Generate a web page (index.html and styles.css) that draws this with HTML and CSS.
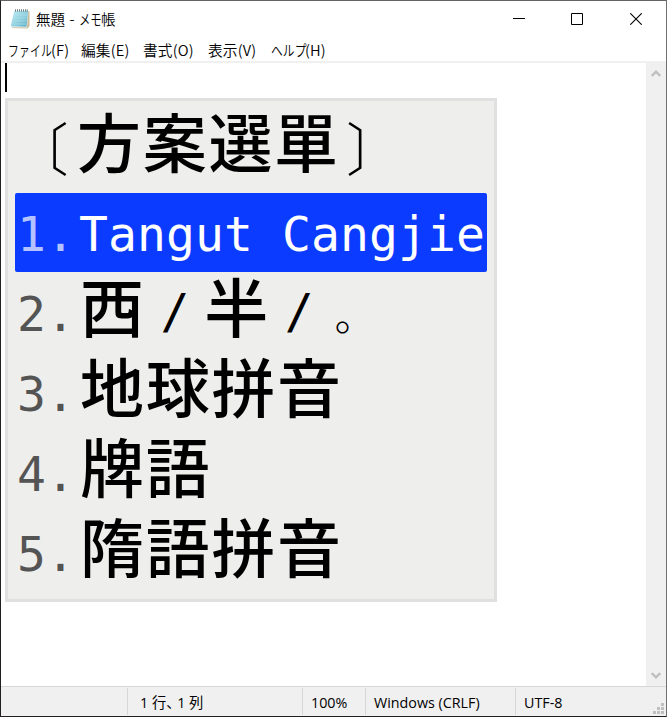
FILE: index.html
```html
<!DOCTYPE html>
<html lang="ja">
<head>
<meta charset="utf-8">
<title>無題 - メモ帳</title>
<link rel="stylesheet" href="styles.css">
</head>
<body>
<div class="window">
  <header class="titlebar">
    <svg class="app-icon" width="20" height="20" viewBox="0 0 20 20">
      <defs><linearGradient id="paper" x1="0" y1="0" x2="1" y2="1"><stop offset="0" stop-color="#c4edf6"/><stop offset=".55" stop-color="#8ccfdf"/><stop offset="1" stop-color="#58aabd"/></linearGradient></defs>
      <path d="M5 2L19.5 2L19.5 17L17.5 19.5L2 19Z" fill="#c9b996"/>
      <path d="M4.5 1.5L18.5 1.5L17 18.5L.8 18.2Z" fill="#eef7f8"/>
      <path d="M4.2 2L18.2 2L16.5 17.8L.8 17.2Z" fill="url(#paper)"/>
      <path d="M4 6h13M3.5 9h13M3 12h13M2 15h14" stroke="#b5e0e9" stroke-width=".7"/>
      <path d="M5.5 .2v2.5M7.5 .2v2.5M9.5 .2v2.5M11.5 .2v2.5M13.5 .2v2.5M15.5 .2v2.5M17.2 .2v2.5" stroke="#68777a" stroke-width=".9"/>
    </svg>
    <h1 class="title">無題<span class="dash">-</span><span class="kana kana-3">メモ</span>帳</h1>
    <div class="controls">
      <svg width="12" height="12" viewBox="0 0 12 12"><path d="M0 5.5h12" stroke="#000"/></svg>
      <svg width="12" height="12" viewBox="0 0 12 12"><path d="M.5 .5h11v11H.5z" fill="none" stroke="#000"/></svg>
      <svg width="12" height="12" viewBox="0 0 12 12"><path d="M.3 .3L11.7 11.7M11.7 .3L.3 11.7" stroke="#000" stroke-width="1.1"/></svg>
    </div>
  </header>
  <nav class="menubar">
    <span class="menu m1"><span class="kana kana-file">ファイル</span>(F)</span>
    <span class="menu m2">編集(E)</span>
    <span class="menu m3">書式(O)</span>
    <span class="menu m4">表示(V)</span>
    <span class="menu m5"><span class="kana kana-help">ヘルプ</span>(H)</span>
  </nav>
  <main class="editor">
    <div class="page">
      <div class="caret"></div>
      <section class="candidates">
        <h2 class="heading"><span class="bracket open">〔</span>方案選單<span class="bracket close">〕</span></h2>
        <ol class="list">
          <li class="row selected"><span class="num">1.</span><span class="latin">Tangut Cangjie</span></li>
          <li class="row"><span class="num">2.</span><span class="han">西<span class="slash">/</span>半<span class="slash">/</span><span class="stop">。</span></span></li>
          <li class="row"><span class="num">3.</span><span class="han">地球拼音</span></li>
          <li class="row"><span class="num">4.</span><span class="han">牌語</span></li>
          <li class="row"><span class="num">5.</span><span class="han">隋語拼音</span></li>
        </ol>
      </section>
    </div>
    <aside class="scrollbar">
      <svg width="10" height="7" viewBox="0 0 10 7"><path d="M.7 6L5 1.7L9.3 6" fill="none" stroke="#bfbfbf" stroke-width="2.4"/></svg>
      <svg width="10" height="7" viewBox="0 0 10 7"><path d="M.7 1L5 5.3L9.3 1" fill="none" stroke="#bfbfbf" stroke-width="2.4"/></svg>
    </aside>
  </main>
  <footer class="status">
    <span class="cell blank"></span>
    <span class="cell position">1 行<span class="comma">、</span>1 列</span>
    <span class="cell zoom">100%</span>
    <span class="cell eol">Windows (CRLF)</span>
    <span class="cell encoding">UTF-8</span>
    <svg class="grip" width="11" height="11" viewBox="0 0 11 11"><path d="M8 0h3v3H8zM4 4h3v3H4zM8 4h3v3H8zM0 8h3v3H0zM4 8h3v3H4zM8 8h3v3H8z" fill="#bfbfbf"/></svg>
  </footer>
</div>
</body>
</html>
```
FILE: styles.css
```css
* { box-sizing: border-box; }
body { margin: 0; background: #fff; }

.window {
  display: flex;
  flex-direction: column;
  width: 667px;
  height: 717px;
  border: 1px solid #231f20;
  border-top-color: #656366;
  border-right-color: #707070;
  background: #fff;
  color: #000;
  font: 14.5px/20px "Open Sans", "Noto Sans CJK JP", sans-serif;
  white-space: nowrap;
  overflow: hidden;
}

.titlebar { display: flex; height: 36px; padding-left: 9px; }
.app-icon { margin-top: 8px; }
.title { display: flex; margin: 8px 0 0 6px; font-size: 14.5px; font-weight: 350; font-family: "Noto Sans CJK JP", sans-serif; }
.dash { width: 14px; text-align: center; }
.kana { display: inline-block; transform-origin: 0 50%; }
.kana-3 { width: 22px; transform: scaleX(.78); }
.controls { display: flex; gap: 46px; margin: 12px 24px 0 auto; }
.controls svg:nth-child(-n+2) { margin: 0 1px 0 -1px; }

.menubar { display: flex; height: 24px; padding: 3px 0 0 7px; font-family: "Noto Sans CJK JP", sans-serif; font-weight: 350; font-size: 14.7px; }
.menu { letter-spacing: .15px; }
.m1 { width: 73px; }
.m2 { width: 62px; }
.m3 { width: 65px; }
.m4 { width: 63px; }
.kana-file { width: 43px; transform: scaleX(.74); }
.kana-help { width: 34px; transform: scaleX(.8); }

.editor { display: flex; flex: 1; min-height: 0; border-top: 2px solid #f0f0f0; }
.page { flex: 1; padding-left: 4px; }
.caret { width: 2px; height: 29px; background: #000; }

.candidates {
  width: 492px;
  height: 504px;
  margin-top: 6px;
  padding: 0 7px;
  border: 3px solid #e0e0e0;
  background: #eeeeec;
}
.heading, .han {
  font-family: "Noto Sans CJK TC", sans-serif;
  font-weight: 500;
  font-size: 64px;
  letter-spacing: 1.7px;
}
.heading { display: flex; height: 92px; margin: 0; line-height: 77px; }
.bracket { width: 62px; font-size: 57px; line-height: 88px; font-weight: 300; letter-spacing: 0; }
.open { margin-left: -3px; width: 65px; }
.close { padding-left: 6px; }
.list { display: flex; flex-direction: column; gap: 1px; margin: 0; padding: 0; list-style: none; }
.row { display: flex; height: 79px; padding-left: 2px; }
.num, .latin { font: 48px/82px "DejaVu Sans Mono", monospace; }
.num { width: 62px; color: #545454; }
.latin { letter-spacing: .1px; }
.han { display: flex; padding-left: 1px; line-height: 63px; }
.slash { width: 58.5px; text-align: center; font: 48px/77px "DejaVu Sans Mono", monospace; letter-spacing: 0; }
.stop { font: 300 41px/80px "Noto Sans CJK JP", sans-serif; padding-left: 6px; }
.selected { border-radius: 2px; background: #0a3bff; color: #fff; }
.selected .num { color: #b4c2ff; }

.scrollbar {
  display: flex;
  flex-direction: column;
  align-items: center;
  justify-content: space-between;
  width: 20px;
  padding: 7px 1px 7px 0;
  background: #f0f0f0;
}

.status {
  display: flex;
  position: relative;
  height: 30px;
  padding: 1px 0 1px;
  border-top: 1px solid #d7d7d7;
  background: #f0f0f0;
  font-size: 14.3px;
}
.cell { padding: 5px 0 0 8px; border-right: 1px solid #d7d7d7; }
.blank { width: 127px; }
.position { width: 175px; padding-left: 12px; }
.comma { display: inline-block; width: 11px; }
.zoom { width: 63px; }
.eol { width: 150px; }
.encoding { border: 0; }
.grip { position: absolute; right: 2px; bottom: 2px; }
```
